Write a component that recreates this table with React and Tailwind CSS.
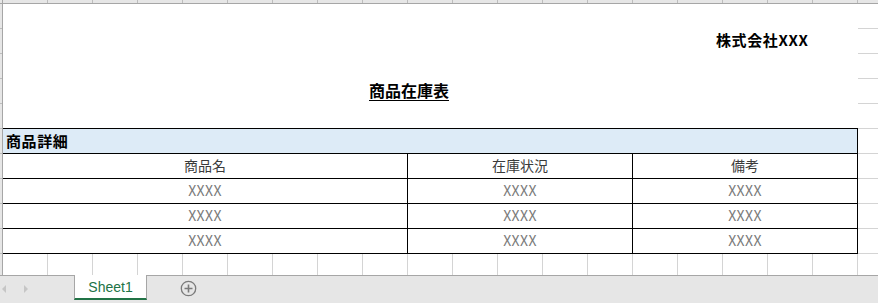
const COLS = Array.from({ length: 19 }, (_, i) => i)
const ROWS = [
  ['XXXX', 'XXXX', 'XXXX'],
  ['XXXX', 'XXXX', 'XXXX'],
  ['XXXX', 'XXXX', 'XXXX'],
]

const jp = { fontFamily: '"Noto Sans CJK JP", "Noto Sans", sans-serif' }

function ColumnStrip() {
  return (
    <div className="flex h-[4px] bg-[#e6e6e6] border-b border-[#a6a6a6]">
      <div className="w-[3px] shrink-0 border-r border-[#a6a6a6]" />
      {COLS.map((c) => (
        <div key={c} className="w-[45px] shrink-0 border-r border-[#bdbdbd]" />
      ))}
      <div className="flex-1" />
    </div>
  )
}

function RowStrip() {
  return (
    <div className="w-[3px] shrink-0 bg-[#e6e6e6] border-r border-[#a6a6a6] flex flex-col">
      {Array.from({ length: 10 }, (_, i) => (
        <div key={i} className="h-[25px] shrink-0 border-b border-[#bdbdbd]" />
      ))}
    </div>
  )
}

function Cell({ children, className = '' }) {
  return (
    <div className={`flex items-center justify-center border-r border-black pb-[1px] ${className}`}>
      {children}
    </div>
  )
}

function StockTable() {
  return (
    <div className="border-t border-r border-black text-[14px]" style={jp}>
      <div className="h-[25px] flex items-center bg-[#ddebf7] border-b border-black pl-[3px]">
        <span className="font-bold text-[15px] tracking-[0.6px] text-black">商品詳細</span>
      </div>
      <div className="h-[25px] flex border-b border-black text-[#3a3a3a]">
        <Cell className="w-[405px]">商品名</Cell>
        <Cell className="w-[225px]">在庫状況</Cell>
        <div className="flex-1 flex items-center justify-center pb-[1px]">備考</div>
      </div>
      {ROWS.map((r, i) => (
        <div key={i} className="h-[25px] flex border-b border-black text-[#7a7a7a] tracking-[0.4px]">
          <Cell className="w-[405px]">{r[0]}</Cell>
          <Cell className="w-[225px]">{r[1]}</Cell>
          <div className="flex-1 flex items-center justify-center pb-[1px]">{r[2]}</div>
        </div>
      ))}
    </div>
  )
}

function SheetTabs() {
  return (
    <div className="h-[28px] flex bg-[#e6e6e6] border-t border-[#a6a6a6] relative">
      <div className="w-[74px] shrink-0 flex items-center gap-[17px] pl-[2px] pb-[2px]">
        <svg width="5" height="8" viewBox="0 0 5 8">
          <path d="M4 0 L0 4 L4 8 Z" fill="#c6c6c6" />
        </svg>
        <svg width="5" height="8" viewBox="0 0 5 8">
          <path d="M0 0 L4 4 L0 8 Z" fill="#c6c6c6" />
        </svg>
      </div>
      <div className="-mt-px w-[73px] h-[25px] shrink-0 bg-white border-x border-[#a6a6a6] border-b-2 border-b-[#217346] flex items-center justify-center">
        <span className="text-[14px] text-[#217346] pt-[1px]" style={{ fontFamily: '"Liberation Sans", sans-serif' }}>
          Sheet1
        </span>
      </div>
      <div className="pl-[33px] flex items-center pb-[2px]">
        <svg width="17" height="17" viewBox="0 0 17 17">
          <circle cx="8.5" cy="8.5" r="7.2" fill="none" stroke="#7a7a7a" strokeWidth="1.3" />
          <path d="M8.5 4.5 V12.5 M4.5 8.5 H12.5" stroke="#7a7a7a" strokeWidth="1.6" />
        </svg>
      </div>
    </div>
  )
}

export default function App() {
  return (
    <div className="w-[878px] h-[303px] bg-white overflow-hidden flex flex-col" style={jp}>
      <ColumnStrip />
      <div className="h-[271px] flex">
        <RowStrip />
        <div className="w-[855px] shrink-0 flex flex-col">
          {/* print area above the table */}
          <div className="h-[25px]" />
          <div className="h-[25px] flex items-center pl-[713px] pb-[2px]">
            <span className="font-bold text-[15px] tracking-[0.6px] whitespace-nowrap text-black">株式会社XXX</span>
          </div>
          <div className="h-[25px]" />
          <div className="h-[25px] flex items-center pl-[366px] pb-[3px]">
            <span className="font-bold text-[16px] underline underline-offset-[3px] whitespace-nowrap text-black">
              商品在庫表
            </span>
          </div>
          <div className="h-[24px]" />
          <StockTable />
          <div className="flex-1 flex">
            {COLS.map((c) => (
              <div key={c} className="w-[45px] shrink-0 border-r border-[#d4d4d4]" />
            ))}
          </div>
        </div>
        <div className="flex-1 flex flex-col">
          {Array.from({ length: 10 }, (_, i) => (
            <div key={i} className="h-[25px] shrink-0 border-b border-[#d4d4d4]" />
          ))}
        </div>
      </div>
      <SheetTabs />
    </div>
  )
}
